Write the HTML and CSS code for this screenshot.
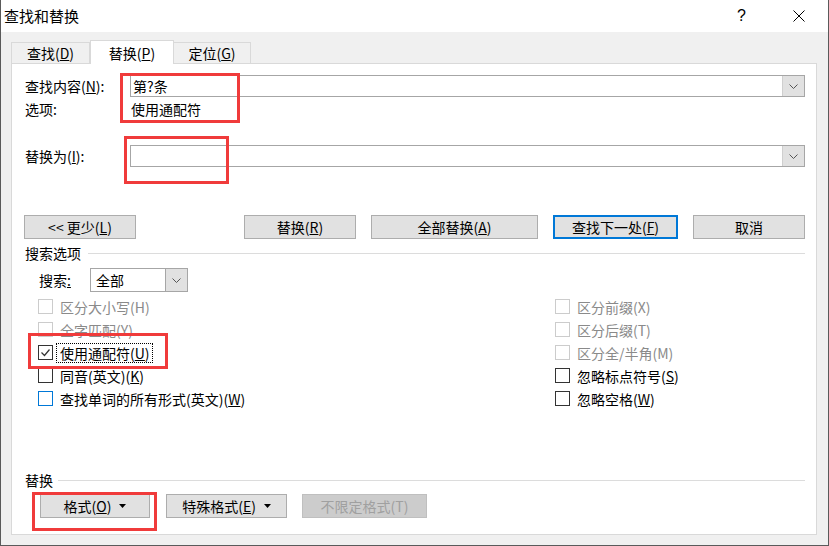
FILE: index.html
```html
<!DOCTYPE html>
<html lang="zh-CN">
<head>
<meta charset="utf-8">
<title>查找和替换</title>
<link rel="stylesheet" href="styles.css">
</head>
<body>
<div class="window">
  <div class="titlebar">
    <span class="title">查找和替换</span>
    <span class="help">?</span>
    <span class="close"><svg width="12" height="12" viewBox="0 0 12 12"><path d="M0.5 0.5 L11.5 11.5 M11.5 0.5 L0.5 11.5" stroke="#000" stroke-width="1" fill="none"/></svg></span>
  </div>
  <div class="tabs">
    <div class="tab">查找(<u>D</u>)</div>
    <div class="tab active">替换(<u>P</u>)</div>
    <div class="tab">定位(<u>G</u>)</div>
  </div>
  <div class="panel">
    <div class="row row-find">
      <span class="label">查找内容(<u>N</u>):</span>
      <div class="combo">
        <span class="val">第?条</span>
        <span class="dd"><svg width="9" height="5" viewBox="0 0 9 5"><path d="M0.5 0.5 L4.5 4.5 L8.5 0.5" stroke="#555" fill="none"/></svg></span>
      </div>
    </div>
    <div class="row row-opt">
      <span class="label">选项:</span>
      <span class="optval">使用通配符</span>
    </div>
    <div class="row row-repl">
      <span class="label">替换为(<u>I</u>):</span>
      <div class="combo">
        <span class="val"></span>
        <span class="dd"><svg width="9" height="5" viewBox="0 0 9 5"><path d="M0.5 0.5 L4.5 4.5 L8.5 0.5" stroke="#555" fill="none"/></svg></span>
      </div>
    </div>
    <div class="btnrow">
      <div class="btn b-less">&lt;&lt; 更少(<u>L</u>)</div>
      <div class="btn b-repl">替换(<u>R</u>)</div>
      <div class="btn b-all">全部替换(<u>A</u>)</div>
      <div class="btn b-next">查找下一处(<u>F</u>)</div>
      <div class="btn b-cancel">取消</div>
    </div>
    <div class="group g-search">
      <span>搜索选项</span><span class="line"></span>
    </div>
    <div class="searchrow">
      <span class="slabel">搜索<u>:</u></span>
      <div class="select">
        <span class="val">全部</span>
        <span class="dd"><svg width="9" height="5" viewBox="0 0 9 5"><path d="M0.5 0.5 L4.5 4.5 L8.5 0.5" stroke="#555" fill="none"/></svg></span>
      </div>
    </div>
    <div class="checks">
      <div class="col">
        <div class="chk dis"><span class="cb"></span><span>区分大小写(H)</span></div>
        <div class="chk dis"><span class="cb"></span><span>全字匹配(Y)</span></div>
        <div class="chk"><span class="cb"><svg width="13" height="13" viewBox="0 0 13 13"><path d="M2.5 6.5 L5.5 9.5 L10.5 3.5" stroke="#333" stroke-width="1.2" fill="none"/></svg></span><span class="focus">使用通配符(<u>U</u>)</span></div>
        <div class="chk"><span class="cb"></span><span>同音(英文)(<u>K</u>)</span></div>
        <div class="chk"><span class="cb blue"></span><span>查找单词的所有形式(英文)(<u>W</u>)</span></div>
      </div>
      <div class="col">
        <div class="chk dis"><span class="cb"></span><span>区分前缀(X)</span></div>
        <div class="chk dis"><span class="cb"></span><span>区分后缀(T)</span></div>
        <div class="chk dis"><span class="cb"></span><span>区分全/半角(M)</span></div>
        <div class="chk"><span class="cb"></span><span>忽略标点符号(<u>S</u>)</span></div>
        <div class="chk"><span class="cb"></span><span>忽略空格(<u>W</u>)</span></div>
      </div>
    </div>
    <div class="group g-repl">
      <span>替换</span><span class="line"></span>
    </div>
    <div class="bottomrow">
      <div class="btn b-fmt">格式(<u>O</u>)<svg class="tri" width="7" height="4" viewBox="0 0 7 4"><path d="M0 0 L7 0 L3.5 4 Z" fill="#000"/></svg></div>
      <div class="btn b-special">特殊格式(<u>E</u>)<svg class="tri" width="7" height="4" viewBox="0 0 7 4"><path d="M0 0 L7 0 L3.5 4 Z" fill="#000"/></svg></div>
      <div class="btn b-nofmt">不限定格式(T)</div>
    </div>
  </div>
  <div class="mark m1"></div>
  <div class="mark m2"></div>
  <div class="mark m3"></div>
  <div class="mark m4"></div>
</div>
</body>
</html>
```

FILE: styles.css
```css
html, body {
  margin: 0;
  padding: 0;
}
body {
  font-family: "Noto Sans CJK SC", "Noto Sans", sans-serif;
  font-size: 14px;
  color: #000;
}
u {
  text-decoration: underline;
  text-underline-offset: 1px;
}
.window {
  position: relative;
  width: 829px;
  height: 546px;
  box-sizing: border-box;
  background: #f0f0f0;
  border-left: 1px solid #5a5a5a;
  border-right: 1px solid #5a5a5a;
  border-bottom: 1px solid #5a5a5a;
}
.titlebar {
  height: 32px;
  background: #fff;
  display: flex;
  align-items: center;
  padding: 0 23px 0 3px;
  box-sizing: border-box;
}
.title {
  flex: 1;
  font-size: 15px;
  line-height: 20px;
}
.help {
  font-family: "Liberation Sans", sans-serif;
  font-size: 16px;
  line-height: 20px;
  width: 10px;
  margin-right: 46px;
}
.close {
  display: flex;
  width: 12px;
  height: 12px;
}
.tabs {
  height: 31px;
  display: flex;
  align-items: flex-end;
  padding-left: 10px;
}
.tab {
  height: 21px;
  box-sizing: border-box;
  border: 1px solid #d9d9d9;
  border-bottom: none;
  background: #f0f0f0;
  display: flex;
  align-items: center;
  justify-content: center;
  line-height: 18px;
  width: 79px;
}
.tab + .tab {
  border-left: none;
}
.tab.active {
  width: 84px;
  height: 24px;
  background: #fff;
  margin-bottom: -1px;
  position: relative;
  z-index: 1;
  border-left: 1px solid #d9d9d9;
}
.tab.active + .tab {
  width: 77px;
}
.panel {
  margin-left: 10px;
  width: 806px;
  height: 472px;
  box-sizing: border-box;
  border: 1px solid #d9d9d9;
  background: #fff;
  padding: 0 11px 0 13px;
}
.row {
  display: flex;
  align-items: center;
  height: 22px;
}
.row-find {
  margin-top: 11px;
}
.row-opt {
  margin-top: 1px;
}
.row-repl {
  margin-top: 25px;
}
.label {
  width: 105px;
  line-height: 22px;
  white-space: nowrap;
}
.optval {
  padding-left: 1px;
  line-height: 22px;
}
.combo {
  width: 675px;
  height: 22px;
  box-sizing: border-box;
  border: 1px solid #a6a6a6;
  display: flex;
}
.combo .val, .select .val {
  flex: 1;
  padding-left: 2px;
  line-height: 20px;
}
.dd {
  width: 21px;
  background: #e1e1e1;
  border-left: 1px solid #cfcfcf;
  display: flex;
  align-items: center;
  justify-content: center;
}
.btnrow {
  margin-top: 48px;
  display: flex;
  height: 24px;
}
.btn {
  height: 24px;
  box-sizing: border-box;
  border: 1px solid #adadad;
  background: #e1e1e1;
  display: flex;
  align-items: center;
  justify-content: center;
  line-height: 20px;
  white-space: nowrap;
}
.b-less {
  width: 112px;
  margin-left: -1px;
}
.b-repl {
  width: 112px;
  margin-left: auto;
}
.b-all {
  width: 167px;
  margin-left: 15px;
}
.b-next {
  width: 125px;
  margin-left: 15px;
  border: 2px solid #0078d7;
}
.b-cancel {
  width: 112px;
  margin-left: 15px;
}
.group {
  display: flex;
  align-items: center;
  gap: 7px;
  height: 18px;
  line-height: 18px;
}
.group .line {
  flex: 1;
  height: 1px;
  background: #dcdcdc;
}
.g-search {
  margin-top: 5px;
}
.g-repl {
  margin-top: 61px;
  gap: 5px;
}
.searchrow {
  margin-top: 6px;
  height: 24px;
  display: flex;
  align-items: center;
  padding-left: 14px;
}
.slabel {
  width: 51px;
  line-height: 20px;
}
.select {
  width: 98px;
  height: 24px;
  box-sizing: border-box;
  border: 1px solid #a6a6a6;
  display: flex;
}
.select .val {
  padding-left: 5px;
  line-height: 22px;
}
.select .dd {
  border-left: 1px solid #a6a6a6;
}
.checks {
  margin-top: 3px;
  padding-left: 13px;
  display: grid;
  grid-template-columns: 517px 1fr;
}
.chk {
  height: 23px;
  display: flex;
  align-items: center;
  gap: 7px;
  white-space: nowrap;
  line-height: 18px;
}
.cb {
  width: 15px;
  height: 15px;
  box-sizing: border-box;
  border: 1px solid #333;
  background: #fff;
  display: flex;
  align-items: center;
  justify-content: center;
}
.chk.dis {
  color: #8a8a8a;
}
.chk.dis .cb {
  border-color: #cccccc;
}
.cb.blue {
  border-color: #0078d7;
}
.focus {
  outline: 1px dotted #000;
  outline-offset: 0;
  margin-left: -3px;
  padding: 0 2px 0 3px;
}
.bottomrow {
  margin-top: 5px;
  padding-left: 15px;
  display: flex;
  gap: 16px;
}
.b-fmt {
  width: 110px;
}
.b-special {
  width: 121px;
  margin-left: 0;
}
.b-nofmt {
  width: 125px;
  margin-left: -1px;
  background: #cccccc;
  border-color: #bfbfbf;
  color: #a0a0a0;
}
.tri {
  margin-left: 8px;
}
.mark {
  position: absolute;
  border: 3px solid #f03b3b;
  box-sizing: border-box;
}
.m1 {
  left: 119px;
  top: 73px;
  width: 120px;
  height: 50px;
}
.m2 {
  left: 123px;
  top: 136px;
  width: 105px;
  height: 48px;
}
.m3 {
  left: 27px;
  top: 333px;
  width: 140px;
  height: 36px;
}
.m4 {
  left: 31px;
  top: 492px;
  width: 125px;
  height: 39px;
}
```
